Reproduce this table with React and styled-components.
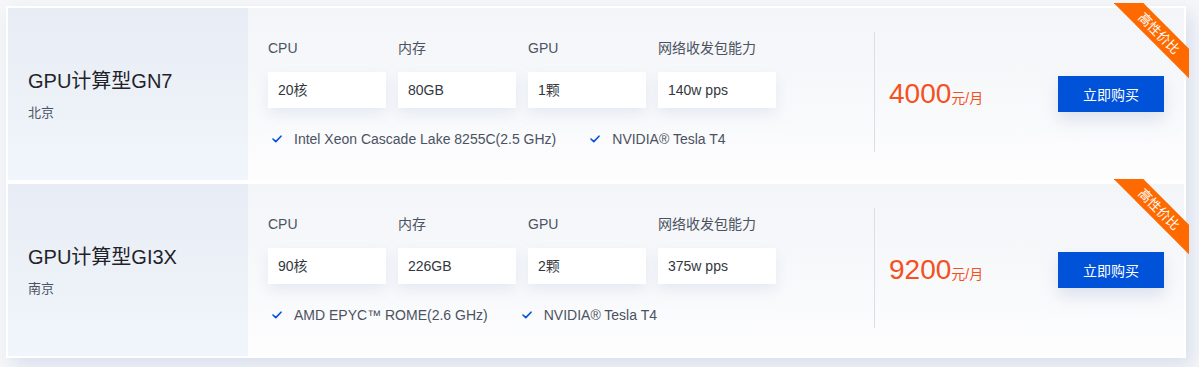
import React from "react";
import styled, { createGlobalStyle } from "styled-components";

const products = [
  {
    name: "GPU计算型GN7",
    region: "北京",
    specs: [
      { label: "CPU", value: "20核" },
      { label: "内存", value: "80GB" },
      { label: "GPU", value: "1颗" },
      { label: "网络收发包能力", value: "140w pps" },
    ],
    features: ["Intel Xeon Cascade Lake 8255C(2.5 GHz)", "NVIDIA® Tesla T4"],
    price: "4000",
  },
  {
    name: "GPU计算型GI3X",
    region: "南京",
    specs: [
      { label: "CPU", value: "90核" },
      { label: "内存", value: "226GB" },
      { label: "GPU", value: "2颗" },
      { label: "网络收发包能力", value: "375w pps" },
    ],
    features: ["AMD EPYC™ ROME(2.6 GHz)", "NVIDIA® Tesla T4"],
    price: "9200",
  },
];

const CheckIcon = () => (
  <svg width="10" height="8" viewBox="0 0 10 8" fill="none">
    <polyline
      points="1,4 3.8,6.6 9,1.2"
      stroke="#0052d9"
      strokeWidth="1.6"
      strokeLinecap="round"
      strokeLinejoin="round"
    />
  </svg>
);

const App = () => {
  return (
    <>
      <GlobalStyle />
      <Page>
        <List>
          {products.map((p) => (
            <Card key={p.name}>
              <Side>
                <Name>{p.name}</Name>
                <Region>{p.region}</Region>
              </Side>

              <Main>
                <Specs>
                  <SpecGrid>
                    {p.specs.map((s) => (
                      <Spec key={s.label}>
                        <SpecLabel>{s.label}</SpecLabel>
                        <SpecBox>{s.value}</SpecBox>
                      </Spec>
                    ))}
                  </SpecGrid>
                  <Features>
                    {p.features.map((f) => (
                      <Feature key={f}>
                        <CheckIcon />
                        <span>{f}</span>
                      </Feature>
                    ))}
                  </Features>
                </Specs>

                <Divider />

                <PriceArea>
                  <Price>
                    <Amount>{p.price}</Amount>
                    <Unit>元/月</Unit>
                  </Price>
                  <BuyButton>立即购买</BuyButton>
                </PriceArea>
              </Main>

              <Ribbon>
                <RibbonBand>高性价比</RibbonBand>
              </Ribbon>
            </Card>
          ))}
        </List>
      </Page>
    </>
  );
};

export default App;

/* ============= STYLES ================= */

const GlobalStyle = createGlobalStyle`
  body {
    margin: 0;
    background: #f6f7f9;
    font-family: "Liberation Sans", Arial, "Noto Sans CJK SC", sans-serif;
  }
`;

const Page = styled.div`
  width: 1199px;
  height: 367px;
  padding: 6px 0 0 6px;
  box-sizing: border-box;
  overflow: hidden;
`;

const List = styled.div`
  width: 1180px;
  display: flex;
  flex-direction: column;
  box-shadow: 6px 8px 18px rgba(205, 214, 232, 0.75);
`;

const Card = styled.div`
  position: relative;
  display: flex;
  height: 176px;
  box-sizing: border-box;
  border: 2px solid #ffffff;
`;

const Side = styled.div`
  width: 240px;
  flex-shrink: 0;
  display: flex;
  flex-direction: column;
  justify-content: center;
  padding: 2px 0 0 20px;
  box-sizing: border-box;
  background: linear-gradient(180deg, #e8ecf4 0%, #edf1f8 60%, #f1f5fc 100%);
`;

const Name = styled.div`
  font-size: 20px;
  line-height: 28px;
  color: #1f2329;
`;

const Region = styled.div`
  margin-top: 8px;
  font-size: 13px;
  line-height: 20px;
  color: #4b5261;
`;

const Main = styled.div`
  flex: 1;
  display: flex;
  padding: 0 20px;
  background: linear-gradient(180deg, #f3f5f8 0%, #f8f9fb 55%, #fdfdfe 100%);
`;

const Specs = styled.div`
  width: 606px;
  padding-top: 30px;
  box-sizing: border-box;
`;

const SpecGrid = styled.div`
  display: grid;
  grid-template-columns: repeat(4, 118px);
  column-gap: 12px;
`;

const Spec = styled.div`
  display: flex;
  flex-direction: column;
`;

const SpecLabel = styled.div`
  font-size: 14px;
  line-height: 20px;
  color: #4b5261;
`;

const SpecBox = styled.div`
  margin-top: 14px;
  height: 36px;
  line-height: 36px;
  padding: 0 10px;
  background: #ffffff;
  font-size: 14px;
  color: #333740;
  box-shadow: 0 6px 14px rgba(214, 221, 235, 0.55);
`;

const Features = styled.div`
  display: flex;
  gap: 34px;
  margin-top: 21px;
  padding-left: 4px;
`;

const Feature = styled.div`
  display: flex;
  align-items: center;
  gap: 12px;
  font-size: 14px;
  line-height: 20px;
  color: #4b5261;
`;

const Divider = styled.div`
  width: 1px;
  margin: 24px 0 28px;
  background: #dcdee2;
`;

const PriceArea = styled.div`
  flex: 1;
  display: flex;
  align-items: center;
  justify-content: space-between;
  padding: 0 0 0 14px;
`;

const Price = styled.div`
  display: flex;
  align-items: baseline;
  color: #f5501e;
`;

const Amount = styled.span`
  font-size: 28px;
  line-height: 34px;
`;

const Unit = styled.span`
  font-size: 14px;
`;

const BuyButton = styled.button`
  width: 106px;
  height: 36px;
  border: none;
  background: #0052d9;
  color: #ffffff;
  font-family: inherit;
  font-size: 14px;
  cursor: pointer;
  box-shadow: 0 8px 16px rgba(200, 210, 228, 0.6);
`;

const Ribbon = styled.div`
  position: absolute;
  top: -5px;
  right: -5px;
  width: 75px;
  height: 75px;
  overflow: hidden;
  pointer-events: none;
`;

const RibbonBand = styled.div`
  position: absolute;
  left: -11px;
  top: 20px;
  width: 112px;
  height: 21px;
  line-height: 21px;
  text-align: center;
  background: #ff6a00;
  color: #ffffff;
  font-size: 13px;
  transform: rotate(45deg);
`;
